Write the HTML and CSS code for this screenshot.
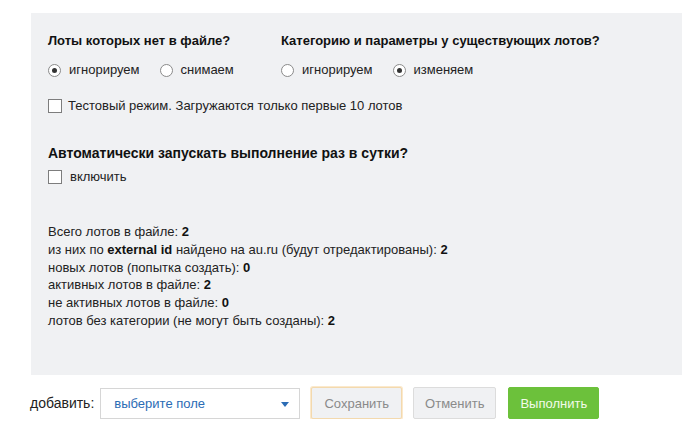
FILE: index.html
```html
<!DOCTYPE html>
<html>
<head>
<meta charset="utf-8">
<link rel="stylesheet" href="styles.css">
</head>
<body>
<div class="panel">
  <div class="cols">
    <div class="col col-first">
      <div class="heading">Лоты которых нет в файле?</div>
      <div class="options">
        <label class="opt"><span class="radio checked"></span>игнорируем</label>
        <label class="opt"><span class="radio"></span>снимаем</label>
      </div>
    </div>
    <div class="col">
      <div class="heading">Категорию и параметры у существующих лотов?</div>
      <div class="options">
        <label class="opt"><span class="radio"></span>игнорируем</label>
        <label class="opt"><span class="radio checked"></span>изменяем</label>
      </div>
    </div>
  </div>
  <label class="check-row test"><span class="checkbox"></span>Тестовый режим. Загружаются только первые 10 лотов</label>
  <div class="heading auto-heading">Автоматически запускать выполнение раз в сутки?</div>
  <label class="check-row enable"><span class="checkbox"></span>включить</label>
  <div class="stats">
    <div>Всего лотов в файле: <b>2</b></div>
    <div>из них по <b>external id</b> найдено на au.ru (будут отредактированы): <b>2</b></div>
    <div>новых лотов (попытка создать): <b>0</b></div>
    <div>активных лотов в файле: <b>2</b></div>
    <div>не активных лотов в файле: <b>0</b></div>
    <div>лотов без категории (не могут быть созданы): <b>2</b></div>
  </div>
</div>
<div class="footer">
  <span class="add-label">добавить:</span>
  <div class="select"><span>выберите поле</span><span class="caret"></span></div>
  <button class="btn btn-save">Сохранить</button>
  <button class="btn btn-cancel">Отменить</button>
  <button class="btn btn-run">Выполнить</button>
</div>
</body>
</html>
```

FILE: styles.css
```css
html, body {
  margin: 0;
  padding: 0;
  background: #ffffff;
  font-family: "Liberation Sans", Arial, sans-serif;
  font-size: 13px;
  color: #1a1a1a;
}

.panel {
  margin: 13px 0 0 31px;
  height: 362px;
  box-sizing: border-box;
  background: #f0f1f3;
  padding: 20px 17px 0 17px;
}

.cols {
  display: flex;
}

.col-first {
  width: 233px;
}

.heading {
  font-weight: bold;
  font-size: 13px;
  line-height: 16px;
  color: #111;
}

.options {
  display: flex;
  gap: 20px;
  margin-top: 13px;
}

.opt {
  display: flex;
  align-items: center;
  line-height: 16px;
  color: #222;
}

.radio {
  width: 11px;
  height: 11px;
  border: 1px solid #8a8a8a;
  border-radius: 50%;
  background: #fff;
  margin-right: 8px;
  position: relative;
  box-sizing: content-box;
}

.radio.checked::after {
  content: "";
  position: absolute;
  left: 3px;
  top: 3px;
  width: 5px;
  height: 5px;
  border-radius: 50%;
  background: #333;
}

.checkbox {
  width: 12px;
  height: 12px;
  border: 1px solid #7d7d7d;
  background: #fff;
  margin-right: 6px;
  box-sizing: content-box;
}

.check-row {
  display: flex;
  align-items: center;
  line-height: 16px;
  color: #222;
}

.check-row.test {
  margin-top: 20px;
}

.auto-heading {
  margin-top: 31px;
  font-size: 14px;
}

.check-row.enable {
  margin-top: 8px;
}

.check-row.enable .checkbox {
  margin-right: 8px;
}

.stats {
  margin-top: 38px;
  line-height: 17.8px;
  color: #222;
}

.stats b {
  color: #111;
}

.footer {
  display: flex;
  align-items: center;
  margin: 12px 0 0 30px;
}

.add-label {
  font-size: 14px;
  color: #222;
  margin-right: 6px;
}

.select {
  width: 200px;
  height: 31px;
  box-sizing: border-box;
  border: 1px solid #d6d6d6;
  background: #fff;
  display: flex;
  align-items: center;
  justify-content: space-between;
  padding: 0 10px 0 13px;
  color: #2b6cb5;
  font-size: 13px;
}

.caret {
  width: 0;
  height: 0;
  border-left: 4px solid transparent;
  border-right: 4px solid transparent;
  border-top: 5px solid #2b6cb5;
  margin-top: 2px;
}

.btn {
  height: 32px;
  box-sizing: border-box;
  font-family: "Liberation Sans", Arial, sans-serif;
  font-size: 13px;
  border-radius: 2px;
  padding: 0;
}

.btn-save {
  width: 91px;
  margin-left: 11px;
  background: #f0f1f3;
  border: 1px solid #f3d9ae;
  box-shadow: 0 0 0 1px #fbe9cc;
  color: #8a8a8a;
}

.btn-cancel {
  width: 83px;
  margin-left: 11px;
  background: #f0f1f3;
  border: 1px solid #dcdcdc;
  color: #8a8a8a;
}

.btn-run {
  width: 91px;
  margin-left: 12px;
  background: #6cc13b;
  border: 1px solid #6cc13b;
  color: #f3fbe9;
}
```
